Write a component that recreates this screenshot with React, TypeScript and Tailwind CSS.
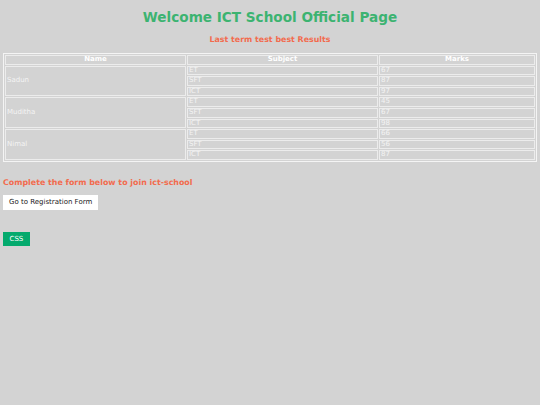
import React from "react";

type Row = { name: string; marks: [string, string][] };

const results: Row[] = [
	{ name: "Sadun", marks: [["ET", "67"], ["SFT", "87"], ["ICT", "97"]] },
	{ name: "Muditha", marks: [["ET", "45"], ["SFT", "67"], ["ICT", "98"]] },
	{ name: "Nimal", marks: [["ET", "66"], ["SFT", "56"], ["ICT", "87"]] },
];

const cell =
	"border border-[#ececec] px-[1px] py-0 text-[7px] leading-[7.6px] text-[#f4f4f4] text-left align-middle";
const head =
	"border border-[#ececec] px-[1px] py-0 text-[7px] leading-[7.6px] text-white font-bold text-center";

const App: React.FC = () => {
	return (
		<div className="min-h-[405px] w-full bg-[#d3d3d3] px-[3px] font-['DejaVu_Sans',Verdana,sans-serif]">
			<h1 className="pt-[9px] text-center text-[13.6px] leading-[16px] font-bold text-[#3cb371]">
				Welcome ICT School Official Page
			</h1>
			<h3 className="mt-[10px] text-center text-[7.9px] leading-[9px] font-bold text-[#f26b4e]">
				Last term test best Results
			</h3>
			<table className="mt-[9px] w-full border-separate border-spacing-[1px] border border-[#f4f4f4]">
				<colgroup>
					<col className="w-[181px]" />
					<col className="w-[191px]" />
					<col />
				</colgroup>
				<thead>
					<tr>
						<th className={head}>Name</th>
						<th className={head}>Subject</th>
						<th className={head}>Marks</th>
					</tr>
				</thead>
				<tbody>
					{results.map((r) =>
						r.marks.map(([subject, mark], i) => (
							<tr key={r.name + subject}>
								{i === 0 && (
									<td rowSpan={3} className={cell}>
										{r.name}
									</td>
								)}
								<td className={cell}>{subject}</td>
								<td className={cell}>{mark}</td>
							</tr>
						))
					)}
				</tbody>
			</table>
			<h3 className="mt-[16px] text-[7.9px] leading-[9px] font-bold text-[#f26b4e]">
				Complete the form below to join ict-school
			</h3>
			<button className="mt-[8px] flex h-[15px] items-center bg-white px-[6px] text-[7px] text-[#222]">
				Go to Registration Form
			</button>
			<button className="mt-[22px] flex h-[14px] items-center bg-[#04aa6d] px-[6.5px] text-[7px] text-white">
				CSS
			</button>
		</div>
	);
};

export default App;
